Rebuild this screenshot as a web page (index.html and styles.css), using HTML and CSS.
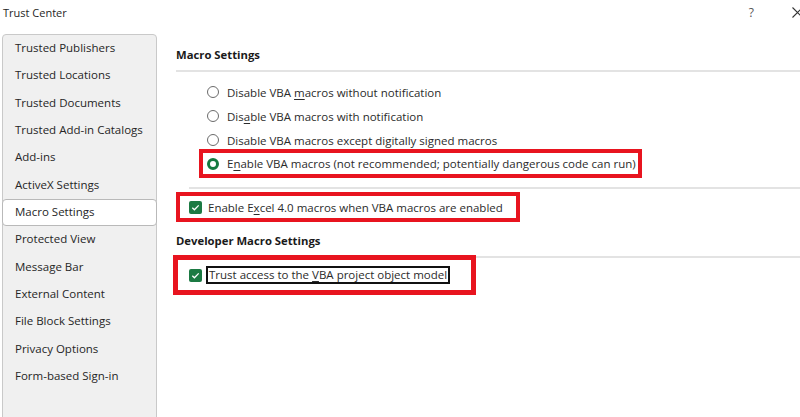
FILE: index.html
```html
<!DOCTYPE html>
<html>
<head>
<meta charset="utf-8">
<link rel="stylesheet" href="styles.css">
</head>
<body>
<div class="titlebar">
  <span class="title">Trust Center</span>
  <span class="help">?</span>
  <svg class="close" width="11" height="11" viewBox="0 0 11 11"><path d="M0.5 0.5L10.5 10.5M10.5 0.5L0.5 10.5" stroke="#333" stroke-width="1.1" fill="none"/></svg>
</div>
<div class="body">
  <nav class="sidebar">
    <div class="nav-item">Trusted Publishers</div>
    <div class="nav-item">Trusted Locations</div>
    <div class="nav-item">Trusted Documents</div>
    <div class="nav-item">Trusted Add-in Catalogs</div>
    <div class="nav-item">Add-ins</div>
    <div class="nav-item">ActiveX Settings</div>
    <div class="nav-item selected">Macro Settings</div>
    <div class="nav-item">Protected View</div>
    <div class="nav-item">Message Bar</div>
    <div class="nav-item">External Content</div>
    <div class="nav-item">File Block Settings</div>
    <div class="nav-item">Privacy Options</div>
    <div class="nav-item">Form-based Sign-in</div>
  </nav>
  <main class="main">
    <div class="heading">Macro Settings</div>
    <div class="sep"></div>
    <div class="radios">
      <div class="radio-row"><span class="radio"></span><span>Disable VBA <u>m</u>acros without notification</span></div>
      <div class="radio-row"><span class="radio"></span><span>Dis<u>a</u>ble VBA macros with notification</span></div>
      <div class="radio-row"><span class="radio"></span><span>Disable VBA macros except digitally signed macros</span></div>
      <div class="radio-row red red1"><span class="radio on"></span><span>E<u>n</u>able VBA macros (not recommended; potentially dangerous code can run)</span></div>
    </div>
    <div class="sep sep2"></div>
    <div class="check-row red red2">
      <svg class="check" width="13" height="13" viewBox="0 0 13 13"><rect width="13" height="13" rx="2" fill="#1c7a43"/><path d="M3.3 6.8L5.4 8.8L9.7 4.4" stroke="#fff" stroke-width="1.3" fill="none"/></svg>
      <span>Enable E<u>x</u>cel 4.0 macros when VBA macros are enabled</span>
    </div>
    <div class="heading heading2">Developer Macro Settings</div>
    <div class="sep sep3"></div>
    <div class="check-row red red3">
      <svg class="check" width="13" height="13" viewBox="0 0 13 13"><rect width="13" height="13" rx="2" fill="#1c7a43"/><path d="M3.3 6.8L5.4 8.8L9.7 4.4" stroke="#fff" stroke-width="1.3" fill="none"/></svg>
      <span class="focus">Trust access to the <u>V</u>BA project object model</span>
    </div>
  </main>
</div>
</body>
</html>
```
FILE: styles.css
```css
* { box-sizing: border-box; }
html, body { margin: 0; padding: 0; }
body {
  width: 800px;
  height: 417px;
  overflow: hidden;
  background: #ffffff;
  font-family: "Open Sans", "Noto Sans", sans-serif;
  font-size: 11.5px;
  color: #2b2b2b;
}
.titlebar {
  height: 34px;
  display: flex;
  align-items: flex-start;
  padding-top: 4px;
}
.title {
  margin-left: 3px;
  font-size: 11px;
  line-height: 17px;
  color: #1f1f1f;
}
.help {
  margin-left: auto;
  font-size: 12px;
  line-height: 17px;
  color: #555;
  margin-right: 38px;
}
.close {
  margin-top: 3px;
  margin-right: -3px;
}
.body {
  display: flex;
  height: 383px;
}
.sidebar {
  width: 155px;
  margin-left: 2px;
  height: 400px;
  background: #f0f0f0;
  border: 1px solid #c9c9c9;
  border-radius: 4px;
  display: flex;
  flex-direction: column;
}
.nav-item {
  height: 27.33px;
  line-height: 26px;
  padding-left: 12px;
  color: #262626;
  white-space: nowrap;
}
.nav-item.selected {
  background: #ffffff;
  border: 1px solid #b9b9b9;
  border-radius: 4px;
  margin: 0 -1px;
  padding-left: 12px;
  line-height: 24px;
}
.main {
  flex: 1;
  padding-left: 19px;
  display: flex;
  flex-direction: column;
  align-items: flex-start;
}
.heading {
  margin-top: 13px;
  height: 16px;
  line-height: 16px;
  font-weight: 700;
  color: #1a1a1a;
  font-size: 11.3px;
}
.sep {
  align-self: stretch;
  height: 2px;
  background: #e3e3e3;
  margin-top: 7px;
}
.radios {
  display: flex;
  flex-direction: column;
  align-items: flex-start;
  margin-top: 8px;
  margin-left: 31px;
}
.radio-row {
  display: flex;
  align-items: center;
  height: 24px;
  white-space: nowrap;
}
.radio {
  width: 12px;
  height: 12px;
  border: 1px solid #6b6b6b;
  border-radius: 50%;
  margin-right: 8px;
  background: #fff;
}
.radio.on {
  border: 3px solid #137a3f;
}
.red {
  border: 4px solid #e8141f;
}
.red1 {
  margin-left: -8px;
  margin-top: -3px;
  height: 29px;
  padding-left: 4px;
  padding-right: 2px;
}
.sep2 {
  margin-top: 9px;
  margin-left: 13px;
}
.check-row {
  display: flex;
  align-items: center;
  white-space: nowrap;
}
.red2 {
  margin-top: 3px;
  height: 30px;
  padding-left: 9px;
  padding-right: 13px;
}
.check {
  flex: none;
  margin-right: 6px;
}
.heading2 {
  margin-top: 11px;
}
.sep3 {
  margin-top: 7px;
}
.red3 {
  margin-top: -3px;
  margin-left: -3px;
  height: 40px;
  border-width: 5px;
  padding-left: 11px;
  padding-right: 21px;
}
.red3 .check {
  margin-right: 4px;
}
.focus {
  border: 2px solid #111;
  padding: 0 1px 0 1px;
  line-height: 14px;
}
u { text-underline-offset: 2px; }
```
